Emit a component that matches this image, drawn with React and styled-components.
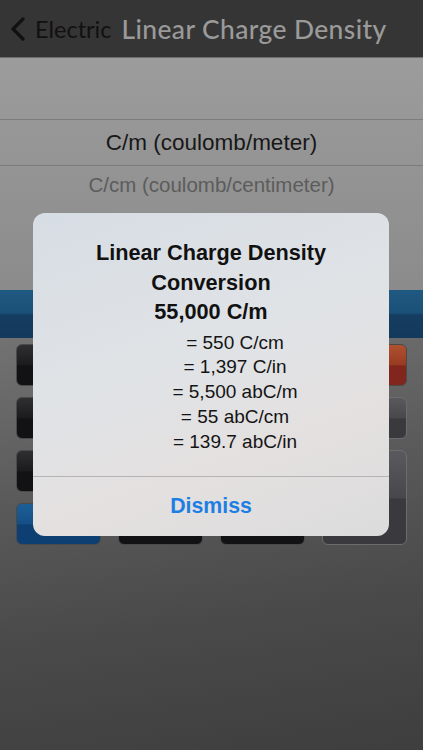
import React from 'react';
import styled, { createGlobalStyle } from 'styled-components';

const GlobalStyle = createGlobalStyle`
  html, body { margin: 0; padding: 0; }
  body { font-family: "Liberation Sans", Arial, sans-serif; background: #444; }
`;

const Screen = styled.div`
  position: relative;
  width: 423px;
  height: 750px;
  overflow: hidden;
  display: flex;
  flex-direction: column;
  background: #404040;
`;

const NavBar = styled.header`
  height: 58px;
  flex-shrink: 0;
  background: #353535;
  border-bottom: 1px solid #6e6e6e;
  display: flex;
  align-items: center;
  padding-left: 10px;
  box-sizing: border-box;
`;

const BackLabel = styled.span`
  font-family: "Lato", "Open Sans", sans-serif;
  font-size: 23.5px;
  color: #111;
  margin-left: 9px;
  margin-right: 10px;
`;

const NavTitle = styled.h1`
  margin: 0;
  font-family: "Lato", "Open Sans", sans-serif;
  font-weight: 500;
  font-size: 26.4px;
  color: #9a9a9a;
  letter-spacing: 0.4px;
`;

const Picker = styled.div`
  height: 232px;
  flex-shrink: 0;
  background: linear-gradient(180deg, #9c9c9c 0%, #8b8b8b 100%);
  display: flex;
  flex-direction: column;
  padding-top: 61px;
  box-sizing: border-box;
`;

const PickerRow = styled.div`
  height: ${p => (p.$selected ? '45px' : '38px')};
  display: flex;
  align-items: center;
  justify-content: center;
  font-size: ${p => (p.$selected ? '22.5px' : '20.5px')};
  color: ${p => (p.$selected ? '#181818' : '#5c5c5c')};
  border-top: ${p => (p.$selected ? '1px solid #7c7c7c' : 'none')};
  border-bottom: ${p => (p.$selected ? '1px solid #7c7c7c' : 'none')};
`;

const BlueBar = styled.div`
  height: 48px;
  flex-shrink: 0;
  background: linear-gradient(180deg, #1f5880 0%, #1b5178 48%, #153d60 52%, #133a5c 100%);
`;

const Keypad = styled.div`
  flex: 1;
  display: grid;
  grid-template-columns: repeat(4, 85px);
  grid-auto-rows: 42px;
  align-content: start;
  column-gap: 17px;
  row-gap: 11px;
  padding: 6px 16px 0;
  background: linear-gradient(172deg, #727272 0%, #5a5a5a 35%, #4a4a4a 65%, #3e3e3e 100%);
`;

const tones = {
  dark: ['#2f2f31', '#1b1b1d', '#121214'],
  orange: ['#b0522e', '#983a22', '#80261c'],
  gray: ['#5a5a5e', '#48484c', '#3a3a3e'],
  blue: ['#1d5e96', '#144f86', '#0e3f72'],
};

const Key = styled.div`
  grid-row: ${p => p.$row} / span ${p => p.$span || 1};
  grid-column: ${p => p.$col};
  border-radius: 6px;
  border: 1px solid ${p => (p.$tone === 'gray' ? '#6c6c70' : '#4a4a4a')};
  background: ${p => {
    const t = tones[p.$tone];
    return `linear-gradient(180deg, ${t[0]} 0%, ${t[1]} 50%, ${t[2]} 52%, ${t[2]} 100%)`;
  }};
`;

const Alert = styled.div`
  position: absolute;
  left: 33px;
  top: 213px;
  width: 356px;
  height: 323px;
  border-radius: 12px;
  background: linear-gradient(160deg, #d7dde4 0%, #e0e3e6 45%, #e4e0e0 70%, #dcdcdc 100%);
  display: flex;
  flex-direction: column;
  overflow: hidden;
`;

const AlertBody = styled.div`
  flex: 1;
  display: flex;
  flex-direction: column;
  align-items: center;
  padding-top: 25px;
`;

const AlertTitle = styled.div`
  font-size: 21.7px;
  font-weight: bold;
  color: #111;
  line-height: 29.5px;
  text-align: center;
`;

const ValueList = styled.div`
  margin-top: 4px;
  padding-left: 48px;
  display: flex;
  flex-direction: column;
  align-items: center;
`;

const Value = styled.div`
  font-size: 19px;
  color: #141414;
  line-height: 24.8px;
`;

const AlertButton = styled.div`
  height: 59px;
  flex-shrink: 0;
  border-top: 1px solid #b4b4b6;
  display: flex;
  align-items: center;
  justify-content: center;
  font-size: 21.3px;
  font-weight: bold;
  color: #1d7ee4;
`;

const values = [
  '= 550 C/cm',
  '= 1,397 C/in',
  '= 5,500 abC/m',
  '= 55 abC/cm',
  '= 139.7 abC/in',
];

const keys = [
  { row: 1, col: 1, tone: 'dark' },
  { row: 1, col: 2, tone: 'dark' },
  { row: 1, col: 3, tone: 'dark' },
  { row: 1, col: 4, tone: 'orange' },
  { row: 2, col: 1, tone: 'dark' },
  { row: 2, col: 2, tone: 'dark' },
  { row: 2, col: 3, tone: 'dark' },
  { row: 2, col: 4, tone: 'gray' },
  { row: 3, col: 1, tone: 'dark' },
  { row: 3, col: 2, tone: 'dark' },
  { row: 3, col: 3, tone: 'dark' },
  { row: 3, col: 4, tone: 'gray', span: 2 },
  { row: 4, col: 1, tone: 'blue' },
  { row: 4, col: 2, tone: 'dark' },
  { row: 4, col: 3, tone: 'dark' },
];

export default function App() {
  return (
    <>
      <GlobalStyle />
      <Screen>
        <NavBar>
          <svg width="16" height="24" viewBox="0 0 16 24">
            <path d="M13 2 L3 12 L13 22" fill="none" stroke="#111" strokeWidth="3.2" strokeLinecap="round" strokeLinejoin="round" />
          </svg>
          <BackLabel>Electric</BackLabel>
          <NavTitle>Linear Charge Density</NavTitle>
        </NavBar>
        <Picker>
          <PickerRow $selected>C/m (coulomb/meter)</PickerRow>
          <PickerRow>C/cm (coulomb/centimeter)</PickerRow>
          <PickerRow>C/in (coulomb/inch)</PickerRow>
        </Picker>
        <BlueBar />
        <Keypad>
          {keys.map((k, i) => (
            <Key key={i} $row={k.row} $col={k.col} $span={k.span} $tone={k.tone} />
          ))}
        </Keypad>
        <Alert>
          <AlertBody>
            <AlertTitle>
              Linear Charge Density
              <br />
              Conversion
              <br />
              55,000 C/m
            </AlertTitle>
            <ValueList>
              {values.map(v => (
                <Value key={v}>{v}</Value>
              ))}
            </ValueList>
          </AlertBody>
          <AlertButton>Dismiss</AlertButton>
        </Alert>
      </Screen>
    </>
  );
}
